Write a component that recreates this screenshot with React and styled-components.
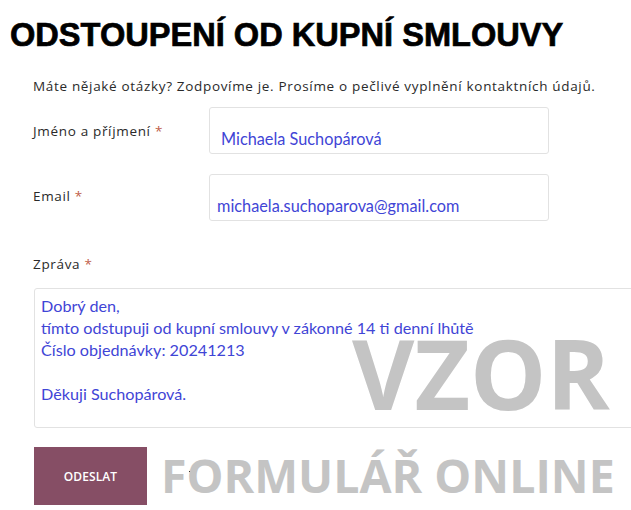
import React from 'react';
import styled, { createGlobalStyle } from 'styled-components';

const Global = createGlobalStyle`
  body {
    margin: 0;
    background: #fff;
  }
`;

const Page = styled.div`
  position: relative;
  width: 631px;
  height: 510px;
  overflow: hidden;
  background: #fff;
`;

const Title = styled.h1`
  margin: 0;
  padding: 18px 0 0 10px;
  font-family: "Liberation Sans", Arial, sans-serif;
  font-weight: 700;
  font-size: 32.6px;
  line-height: 34px;
  color: #000;
  -webkit-text-stroke: 0.7px #000;
  white-space: nowrap;
`;

const Form = styled.div`
  padding: 26px 0 0 33px;
  display: flex;
  flex-direction: column;
`;

const text = `
  font-family: "Open Sans", sans-serif;
  font-size: 13.5px;
  letter-spacing: 0.67px;
  color: #2a2a2a;
`;

const Intro = styled.p`
  ${text}
  margin: 0 0 13px;
  line-height: 16px;
  white-space: nowrap;
`;

const Row = styled.div`
  display: flex;
  align-items: flex-start;
  margin-bottom: ${p => p.gap || 20}px;
`;

const Label = styled.label`
  ${text}
  width: 176px;
  padding-top: ${p => p.top || 16}px;
  line-height: 18px;
`;

const Star = styled.span`
  color: #c0604a;
`;

const Field = styled.div`
  box-sizing: border-box;
  width: 340px;
  height: 47px;
  border: 1px solid #e2e2e2;
  border-radius: 3px;
  padding: ${p => p.pad || '21px 0 0 11px'};
  font-family: Lato, sans-serif;
  font-size: 16.3px;
  line-height: 20px;
  color: #3f45d6;
  white-space: nowrap;
`;

const MsgLabel = styled.label`
  ${text}
  line-height: 18px;
  margin: 0 0 15px;
`;

const Area = styled.div`
  box-sizing: border-box;
  width: 620px;
  height: 140px;
  margin-left: 1px;
  border: 1px solid #e2e2e2;
  border-radius: 3px;
  padding: 6px 0 0 6px;
  font-family: Lato, sans-serif;
  font-size: 16.2px;
  line-height: 22px;
  color: #3f45d6;
  white-space: pre-line;
`;

const Button = styled.button`
  margin: 19px 0 0 1px;
  width: 113px;
  height: 58px;
  border: none;
  background: #864e65;
  color: #fff;
  font-family: "Open Sans", sans-serif;
  font-weight: 600;
  font-size: 12px;
  letter-spacing: 0.1px;
`;

const Mark = styled.div`
  position: absolute;
  left: ${p => p.x}px;
  top: ${p => p.y}px;
  font-family: "Open Sans", sans-serif;
  font-weight: 700;
  font-size: ${p => p.size}px;
  line-height: 1;
  color: #c4c4c4;
  white-space: nowrap;
  pointer-events: none;
`;

const Dot = styled.div`
  position: absolute;
  left: 189px;
  top: 471px;
  width: 1px;
  height: 1px;
  background: #333;
`;

export default function App() {
  return (
    <Page>
      <Global />
      <Title>ODSTOUPENÍ OD KUPNÍ SMLOUVY</Title>
      <Form>
        <Intro>Máte nějaké otázky? Zodpovíme je. Prosíme o pečlivé vyplnění kontaktních údajů.</Intro>
        <Row>
          <Label top={15}>Jméno a příjmení <Star>*</Star></Label>
          <Field>Michaela Suchopárová</Field>
        </Row>
        <Row gap={34}>
          <Label top={13}>Email <Star>*</Star></Label>
          <Field pad="21px 0 0 7px">michaela.suchoparova@gmail.com</Field>
        </Row>
        <MsgLabel>Zpráva <Star>*</Star></MsgLabel>
        <Area>{`Dobrý den,
tímto odstupuji od kupní smlouvy v zákonné 14 ti denní lhůtě
Číslo objednávky: 20241213

Děkuji Suchopárová.`}</Area>
        <Button>ODESLAT</Button>
      </Form>
      <Mark x={352} y={325} size={96}>VZOR</Mark>
      <Mark x={161} y={452} size={46.5}>FORMULÁŘ ONLINE</Mark>
      <Dot />
    </Page>
  );
}
